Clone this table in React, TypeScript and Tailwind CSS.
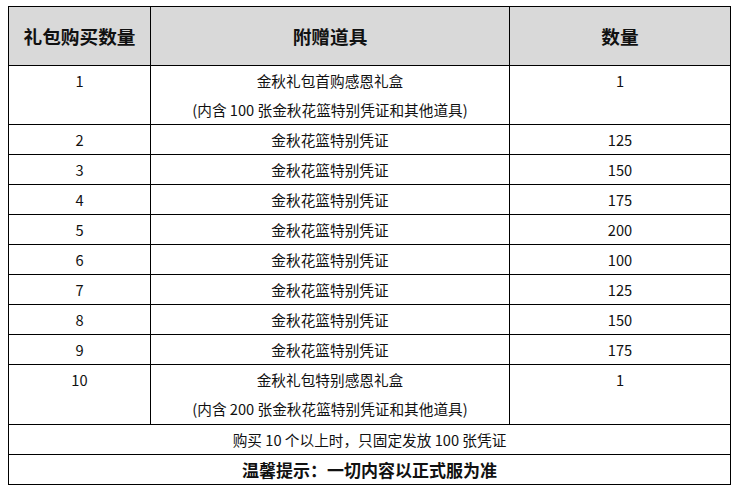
import React from "react";

const rows: [string, string, string][] = [
  ["2", "金秋花篮特别凭证", "125"],
  ["3", "金秋花篮特别凭证", "150"],
  ["4", "金秋花篮特别凭证", "175"],
  ["5", "金秋花篮特别凭证", "200"],
  ["6", "金秋花篮特别凭证", "100"],
  ["7", "金秋花篮特别凭证", "125"],
  ["8", "金秋花篮特别凭证", "150"],
  ["9", "金秋花篮特别凭证", "175"],
];

const cell = "border border-black text-center align-top p-0";

export default function App() {
  return (
    <div
      className="w-[736px] h-[490px] bg-white pt-[6px] pl-[8px] text-[#111] text-[14.67px]"
      style={{ fontFamily: '"Noto Sans CJK SC", "Noto Sans", sans-serif' }}
    >
      <table className="border-collapse w-[722px] table-fixed">
        <colgroup>
          <col className="w-[142px]" />
          <col className="w-[359px]" />
          <col className="w-[221px]" />
        </colgroup>
        <thead>
          <tr className="h-[59px] bg-[#d9d9d9]">
            <th className="border border-black text-center align-middle text-[18.67px] font-bold">礼包购买数量</th>
            <th className="border border-black text-center align-middle text-[18.67px] font-bold">附赠道具</th>
            <th className="border border-black text-center align-middle text-[18.67px] font-bold">数量</th>
          </tr>
        </thead>
        <tbody>
          <tr className="h-[59px]">
            <td className={cell}><div className="leading-[29px]">1</div></td>
            <td className={cell}>
              <div className="leading-[29px]">金秋礼包首购感恩礼盒</div>
              <div className="leading-[29px]">(内含 100 张金秋花篮特别凭证和其他道具)</div>
            </td>
            <td className={cell}><div className="leading-[29px]">1</div></td>
          </tr>
          {rows.map((r) => (
            <tr key={r[0]} className="h-[30px]">
              <td className={cell + " leading-[29px]"}>{r[0]}</td>
              <td className={cell + " leading-[29px]"}>{r[1]}</td>
              <td className={cell + " leading-[29px]"}>{r[2]}</td>
            </tr>
          ))}
          <tr className="h-[60px]">
            <td className={cell}><div className="leading-[29px]">10</div></td>
            <td className={cell}>
              <div className="leading-[29px]">金秋礼包特别感恩礼盒</div>
              <div className="leading-[29px]">(内含 200 张金秋花篮特别凭证和其他道具)</div>
            </td>
            <td className={cell}><div className="leading-[29px]">1</div></td>
          </tr>
          <tr className="h-[30px]">
            <td colSpan={3} className={cell + " leading-[29px]"}>
              购买 10 个以上时，只固定发放 100 张凭证
            </td>
          </tr>
          <tr className="h-[30px]">
            <td colSpan={3} className={cell + " leading-[29px] font-bold text-[17px]"}>
              温馨提示：一切内容以正式服为准
            </td>
          </tr>
        </tbody>
      </table>
    </div>
  );
}
